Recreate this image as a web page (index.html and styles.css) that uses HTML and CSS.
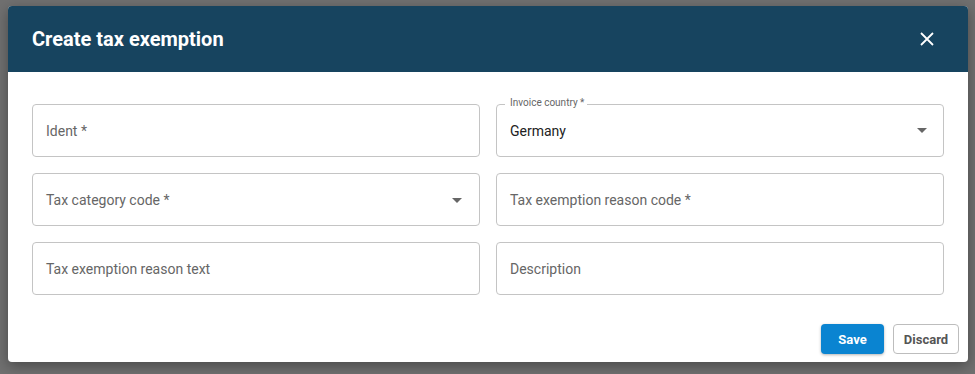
FILE: index.html
```html
<!DOCTYPE html>
<html lang="en">
<head>
    <meta charset="UTF-8">
    <meta name="viewport" content="width=device-width, initial-scale=1.0">
    <title>Create tax exemption</title>
    <link rel="stylesheet" href="styles.css">
</head>
<body>
    <div class="backdrop">
        <div class="dialog">
            <div class="dialog-header">
                <h1>Create tax exemption</h1>
                <button class="close-button" aria-label="Close">
                    <svg width="14" height="14" viewBox="0 0 14 14">
                        <path d="M1 1 L13 13 M13 1 L1 13" stroke="#ffffff" stroke-width="1.8" fill="none"/>
                    </svg>
                </button>
            </div>

            <div class="dialog-body">
                <div class="field">
                    <span class="placeholder">Ident *</span>
                </div>
                <div class="field field-filled">
                    <fieldset class="outline"><legend>Invoice country *</legend></fieldset>
                    <span class="floating-label">Invoice country *</span>
                    <span class="value">Germany</span>
                    <span class="caret"></span>
                </div>
                <div class="field">
                    <span class="placeholder">Tax category code *</span>
                    <span class="caret"></span>
                </div>
                <div class="field">
                    <span class="placeholder">Tax exemption reason code *</span>
                </div>
                <div class="field">
                    <span class="placeholder">Tax exemption reason text</span>
                </div>
                <div class="field">
                    <span class="placeholder">Description</span>
                </div>
            </div>

            <div class="dialog-actions">
                <button class="btn btn-primary">Save</button>
                <button class="btn btn-outline">Discard</button>
            </div>
        </div>
    </div>
</body>
</html>
```

FILE: styles.css
```css
:root {
    --header-color: #17445f;
    --primary-color: #0a84d1;
    --border-color: #c4c4c4;
    --label-color: #666666;
    --text-color: #222222;
}

body {
    margin: 0;
    font-family: Roboto, 'Liberation Sans', sans-serif;
    background-color: #707070;
}

.backdrop {
    padding: 6px 7px 12px 8px;
}

.dialog {
    width: 960px;
    background: #ffffff;
    border-radius: 4px;
    overflow: hidden;
    box-shadow: 0 4px 14px rgba(0, 0, 0, 0.35);
}

.dialog-header {
    height: 66px;
    background-color: var(--header-color);
    display: flex;
    align-items: center;
    justify-content: space-between;
    padding: 0 34px 0 24px;
    box-sizing: border-box;
}

.dialog-header h1 {
    margin: 0;
    color: #ffffff;
    font-size: 20px;
    font-weight: 700;
    letter-spacing: 0;
}

.close-button {
    background: none;
    border: none;
    padding: 0;
    width: 14px;
    height: 14px;
    cursor: pointer;
    display: flex;
}

.dialog-body {
    display: grid;
    grid-template-columns: 1fr 1fr;
    gap: 16px;
    padding: 32px 24px 29px 24px;
}

.field {
    position: relative;
    height: 53px;
    border: 1px solid var(--border-color);
    border-radius: 4px;
    box-sizing: border-box;
    display: flex;
    align-items: center;
    padding: 0 13px;
}

.placeholder {
    font-size: 14px;
    color: var(--label-color);
}

.value {
    font-size: 14px;
    color: var(--text-color);
    padding-left: 1px;
}

.field-filled {
    border: none;
}

.outline {
    position: absolute;
    inset: -5px 0 0 0;
    margin: 0;
    padding: 0 8px;
    border: 1px solid var(--border-color);
    border-radius: 4px;
    pointer-events: none;
}

.outline legend {
    font-size: 10px;
    padding: 0 4px;
    visibility: hidden;
    line-height: 10px;
    height: 10px;
}

.floating-label {
    position: absolute;
    top: -7px;
    left: 14px;
    font-size: 10px;
    color: var(--label-color);
    line-height: 12px;
}

.caret {
    position: absolute;
    right: 17px;
    top: 24px;
    width: 0;
    height: 0;
    border-left: 5px solid transparent;
    border-right: 5px solid transparent;
    border-top: 5px solid #666666;
}

.dialog-actions {
    display: flex;
    justify-content: flex-end;
    gap: 9px;
    padding: 0 9px 8px 0;
}

.btn {
    height: 30px;
    border-radius: 4px;
    font-family: Roboto, 'Liberation Sans', sans-serif;
    font-size: 13px;
    font-weight: 700;
    cursor: pointer;
    box-sizing: border-box;
}

.btn-primary {
    width: 63px;
    background-color: var(--primary-color);
    color: #ffffff;
    border: none;
    box-shadow: 0 1px 3px rgba(0, 0, 0, 0.3);
}

.btn-outline {
    width: 66px;
    background: #ffffff;
    color: #555555;
    border: 1px solid #bdbdbd;
}
```
